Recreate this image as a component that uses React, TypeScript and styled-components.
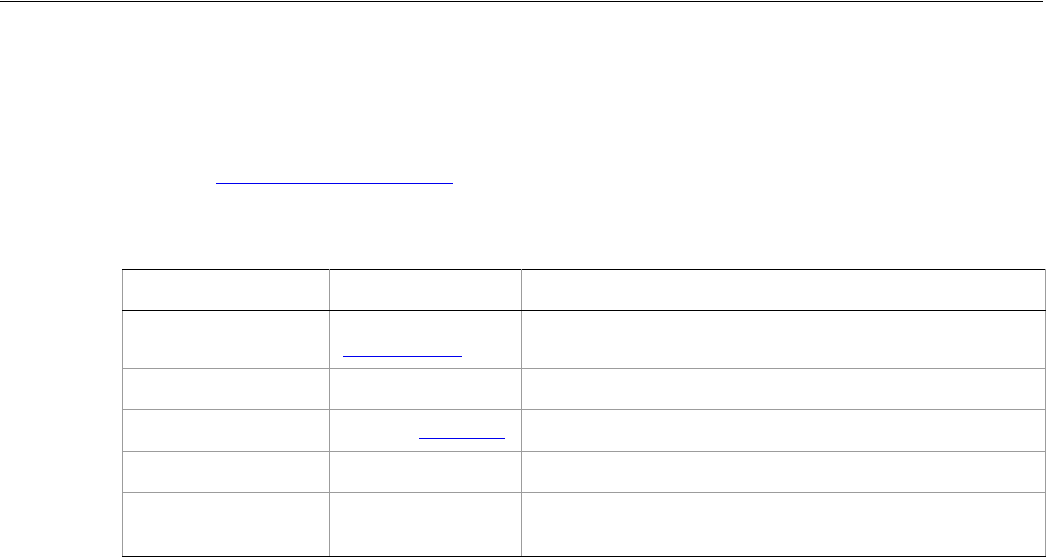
import styled, { createGlobalStyle } from 'styled-components'

const GlobalStyle = createGlobalStyle`
  body {
    margin: 0;
    background: #ffffff;
    font-family: "Liberation Sans", Arial, sans-serif;
    font-size: 13px;
  }
`

const rows = [
  { name: 'callback', type: 'function', typeLink: 'Callback', lead: 0, desc: 'Function invoked once the request has finished.', height: 56, twoLines: true },
  { name: 'options', type: 'Object', desc: 'Optional settings for the request.', height: 41 },
  { name: 'timeout', type: 'number |', typeLink: 'Duration', lead: 76, desc: 'Time to wait before the request is aborted.', height: 41 },
  { name: 'retries', type: 'number', desc: 'How many times a failed request is repeated.', height: 41 },
  { name: 'signal', type: 'AbortSignal', desc: 'Signal that cancels the request when it fires.', height: 64 },
]

export default function App() {
  return (
    <>
      <GlobalStyle />
      <TopRule />
      <Page>
        <Title>request(url, callback, options)</Title>
        <Intro>
          <Link href="#" $width={237}>
            See the request reference
          </Link>
        </Intro>
        <Table>
          <colgroup>
            <col style={{ width: 207 }} />
            <col style={{ width: 192 }} />
            <col />
          </colgroup>
          <thead>
            <Row $height={41}>
              <HeadCell>Name</HeadCell>
              <HeadCell>Type</HeadCell>
              <HeadCell>Description</HeadCell>
            </Row>
          </thead>
          <tbody>
            {rows.map((r, i) => (
              <Row key={r.name} $height={r.height} $last={i === rows.length - 1}>
                <Cell>{r.name}</Cell>
                <Cell $shift={r.twoLines ? 1 : 0}>
                  {r.typeLink ? (
                    <>
                      <Lead $width={r.lead ?? 0}>{r.type}</Lead>
                      {r.twoLines && <br />}
                      <Link href="#" $width={r.twoLines ? 119 : 86}>
                        {r.typeLink}
                      </Link>
                    </>
                  ) : (
                    r.type
                  )}
                </Cell>
                <Cell>{r.desc}</Cell>
              </Row>
            ))}
          </tbody>
        </Table>
      </Page>
    </>
  )
}

const TopRule = styled.div`
  margin-top: 1px;
  width: 1043px;
  height: 0;
  border-top: 1px solid #000000;
`

const Page = styled.main`
  padding: 0 0 0 122px;
  color: transparent;
`

const Title = styled.h1`
  margin: 0;
  padding-top: 40px;
  height: 40px;
  line-height: 40px;
  font-size: 24px;
  font-weight: bold;
`

const Intro = styled.p`
  margin: 85px 0 0 94px;
  height: 16px;
  line-height: 16px;
`

const Link = styled.a<{ $width: number }>`
  display: inline-block;
  box-sizing: border-box;
  width: ${(p) => p.$width}px;
  height: 17px;
  line-height: 16px;
  vertical-align: top;
  overflow: hidden;
  white-space: nowrap;
  color: transparent;
  text-decoration: none;
  border-bottom: 1px solid #0000ee;
`

const Lead = styled.span<{ $width: number }>`
  display: inline-block;
  min-width: ${(p) => p.$width}px;
  vertical-align: top;
`

const Table = styled.table`
  margin-top: 86px;
  width: 924px;
  border-collapse: collapse;
  table-layout: fixed;
`

const Row = styled.tr<{ $height: number; $last?: boolean }>`
  height: ${(p) => p.$height}px;

  & > td {
    border-bottom-color: ${(p) => (p.$last ? '#000000' : '#9c9c9c')};
  }
`

const HeadCell = styled.th`
  border: 1px solid #9c9c9c;
  border-top-color: #000000;
  border-bottom-color: #000000;
  padding: 12px 13px;
  line-height: 16px;
  text-align: left;
  font-weight: bold;
  vertical-align: middle;
`

const Cell = styled.td<{ $shift?: number }>`
  border: 1px solid #9c9c9c;
  padding: ${(p) => 12 + (p.$shift ?? 0)}px 13px ${(p) => 12 - (p.$shift ?? 0)}px;
  line-height: 16px;
  vertical-align: middle;
`
